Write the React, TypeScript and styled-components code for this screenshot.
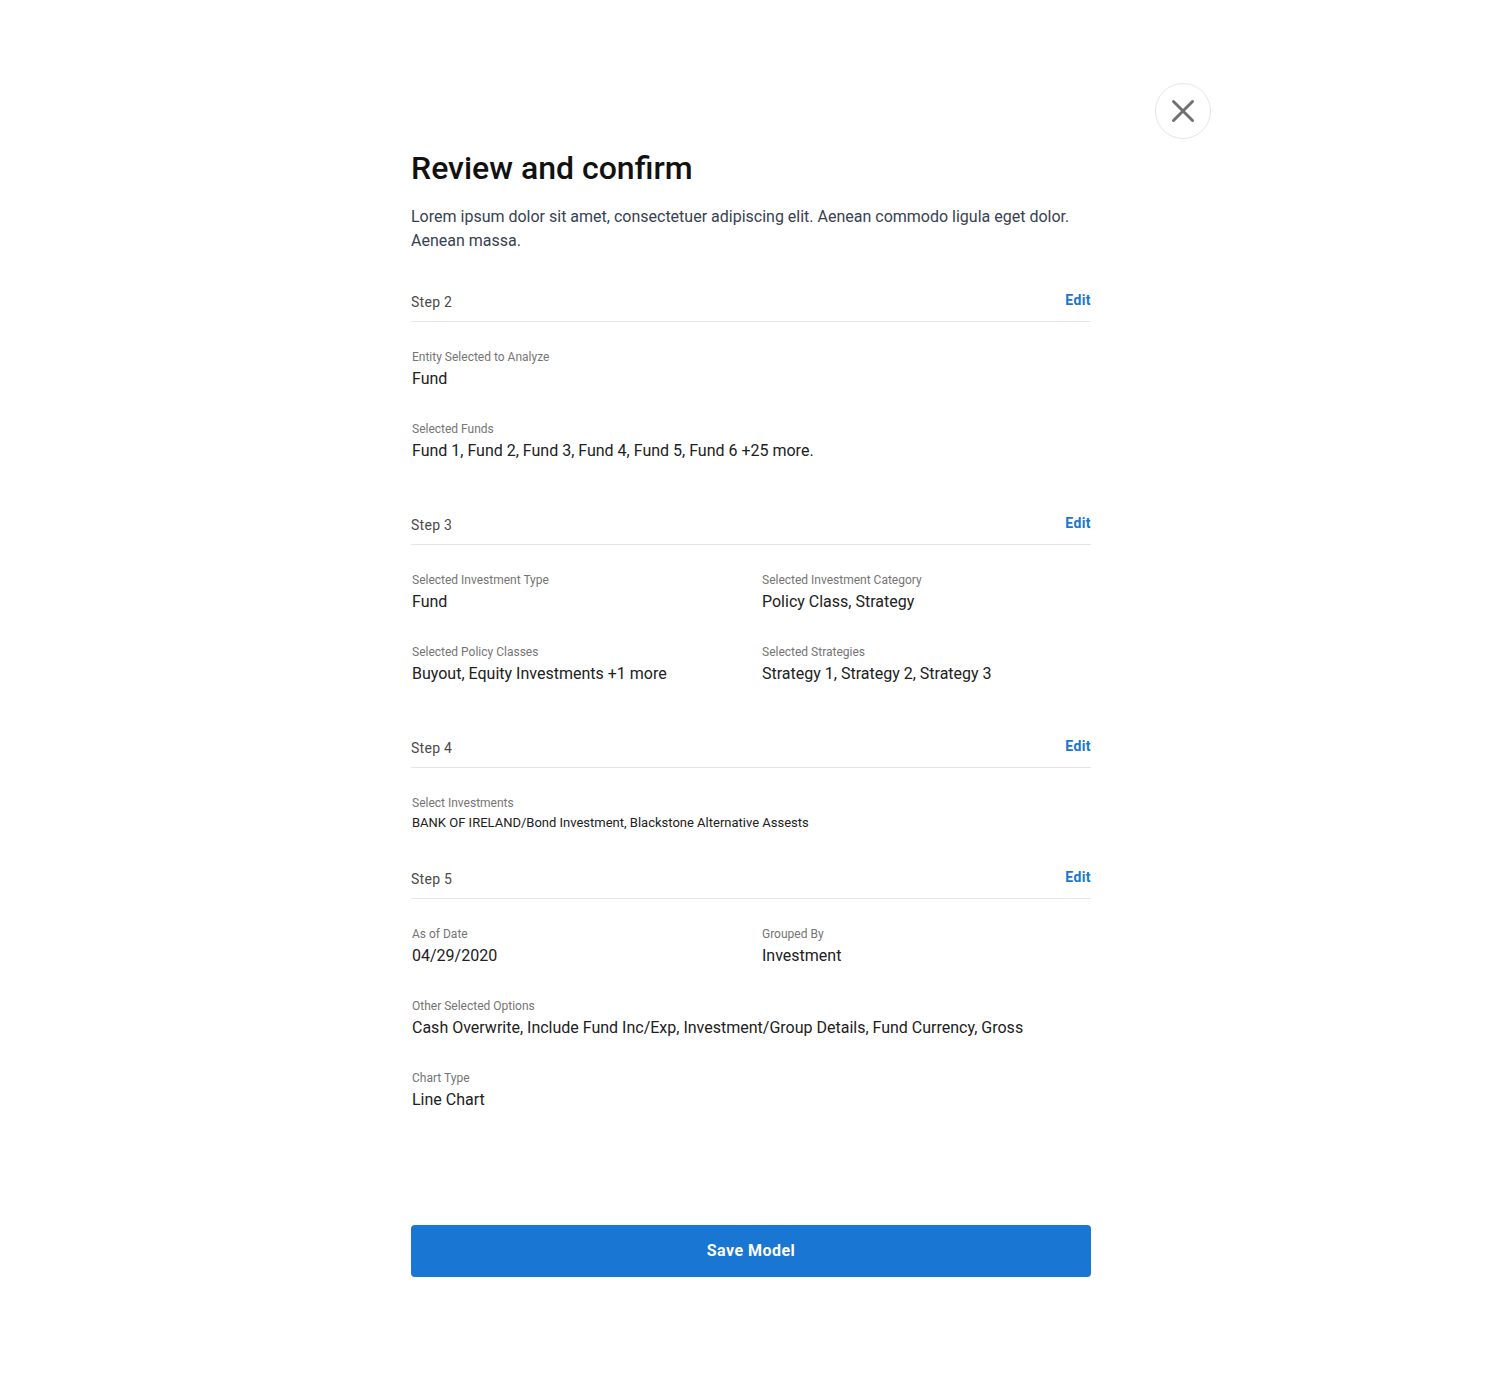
import React from "react";
import styled, { createGlobalStyle } from "styled-components";

const GlobalStyle = createGlobalStyle`
  *, *::before, *::after { box-sizing: border-box; }
  body {
    margin: 0;
    background: #fff;
    font-family: Roboto, "Liberation Sans", sans-serif;
  }
  h1, h2, p, dl, dt, dd { margin: 0; }
`;

const Page = styled.div`
  display: grid;
  grid-template-columns: 1fr minmax(0, 680px) 1fr;
  padding: 83px 24px 100px 25px;
`;

const CloseButton = styled.button`
  grid-column: 3;
  grid-row: 1;
  display: grid;
  place-items: center;
  width: 56px;
  height: 56px;
  margin-left: 64px;
  padding: 0;
  border: 1px solid #e6e6e6;
  border-radius: 50%;
  background: #fff;
  color: #6f7073;
  cursor: pointer;
`;

const Content = styled.main`
  grid-column: 2;
  grid-row: 1;
  padding-top: 64px;
`;

const Title = styled.h1`
  font-size: 32px;
  line-height: 42px;
  font-weight: 500;
  color: #111;
`;

const Intro = styled.p`
  margin-top: 16px;
  font-size: 16px;
  line-height: 24px;
  color: #374151;
`;

const Section = styled.section<{ $gap: number }>`
  margin-top: ${(p) => p.$gap}px;
`;

const SectionHeader = styled.header`
  display: flex;
  justify-content: space-between;
  align-items: flex-start;
  height: 34px;
  border-bottom: 1px solid #e6e6e6;
`;

const StepName = styled.h2`
  padding-top: 4px;
  font-size: 14px;
  line-height: 20px;
  font-weight: 400;
  letter-spacing: 0.02em;
  color: #4a4a4a;
`;

const EditButton = styled.button`
  padding: 2px 0 0;
  border: 0;
  background: none;
  font: 700 14px/20px Roboto, "Liberation Sans", sans-serif;
  letter-spacing: 0.03em;
  color: #1976d2;
  cursor: pointer;
`;

const Details = styled.dl`
  display: grid;
  grid-template-columns: 350px 1fr;
  row-gap: 30px;
  padding: 27px 0 0 1px;
`;

const Detail = styled.div<{ $wide?: boolean }>`
  grid-column: ${(p) => (p.$wide ? "1 / -1" : "auto")};
`;

const Label = styled.dt`
  font-size: 12px;
  line-height: 16px;
  color: #757575;
`;

const Value = styled.dd<{ $small?: boolean }>`
  margin-top: ${(p) => (p.$small ? 0 : 2)}px;
  font-size: ${(p) => (p.$small ? 13 : 16)}px;
  line-height: 24px;
  color: #212121;
`;

const SaveButton = styled.button`
  width: 100%;
  height: 52px;
  margin-top: 113px;
  border: 0;
  border-radius: 4px;
  background: #1976d2;
  color: #fff;
  font: 700 16px/24px Roboto, "Liberation Sans", sans-serif;
  letter-spacing: 0.03em;
  cursor: pointer;
`;

type Item = { label: string; value: string; wide?: boolean; small?: boolean };
type Step = { name: string; gap: number; items: Item[] };

const steps: Step[] = [
  {
    name: "Step 2",
    gap: 35,
    items: [
      { label: "Entity Selected to Analyze", value: "Fund", wide: true },
      { label: "Selected Funds", value: "Fund 1, Fund 2, Fund 3, Fund 4, Fund 5, Fund 6 +25 more.", wide: true },
    ],
  },
  {
    name: "Step 3",
    gap: 48,
    items: [
      { label: "Selected Investment Type", value: "Fund" },
      { label: "Selected Investment Category", value: "Policy Class, Strategy" },
      { label: "Selected Policy Classes", value: "Buyout, Equity Investments +1 more" },
      { label: "Selected Strategies", value: "Strategy 1, Strategy 2, Strategy 3" },
    ],
  },
  {
    name: "Step 4",
    gap: 48,
    items: [
      {
        label: "Select Investments",
        value: "BANK OF IRELAND/Bond Investment, Blackstone Alternative Assests",
        wide: true,
        small: true,
      },
    ],
  },
  {
    name: "Step 5",
    gap: 30,
    items: [
      { label: "As of Date", value: "04/29/2020" },
      { label: "Grouped By", value: "Investment" },
      {
        label: "Other Selected Options",
        value: "Cash Overwrite, Include Fund Inc/Exp, Investment/Group Details, Fund Currency, Gross",
        wide: true,
      },
      { label: "Chart Type", value: "Line Chart", wide: true },
    ],
  },
];

export default function App() {
  return (
    <>
      <GlobalStyle />
      <Page>
        <Content>
          <Title>Review and confirm</Title>
          <Intro>
            Lorem ipsum dolor sit amet, consectetuer adipiscing elit. Aenean commodo ligula eget dolor. Aenean massa.
          </Intro>
          {steps.map((step) => (
            <Section key={step.name} $gap={step.gap}>
              <SectionHeader>
                <StepName>{step.name}</StepName>
                <EditButton type="button" aria-label={`Edit ${step.name}`}>Edit</EditButton>
              </SectionHeader>
              <Details>
                {step.items.map((item) => (
                  <Detail key={item.label} $wide={item.wide}>
                    <Label>{item.label}</Label>
                    <Value $small={item.small}>{item.value}</Value>
                  </Detail>
                ))}
              </Details>
            </Section>
          ))}
          <SaveButton type="button">Save Model</SaveButton>
        </Content>
        <CloseButton type="button" aria-label="Close">
          <svg
            width="24"
            height="24"
            viewBox="0 0 24 24"
            fill="none"
            stroke="currentColor"
            strokeWidth="3"
            strokeLinecap="round"
            aria-hidden="true"
          >
            <path d="M2.5 2.5L21.5 21.5M21.5 2.5L2.5 21.5" />
          </svg>
        </CloseButton>
      </Page>
    </>
  );
}
